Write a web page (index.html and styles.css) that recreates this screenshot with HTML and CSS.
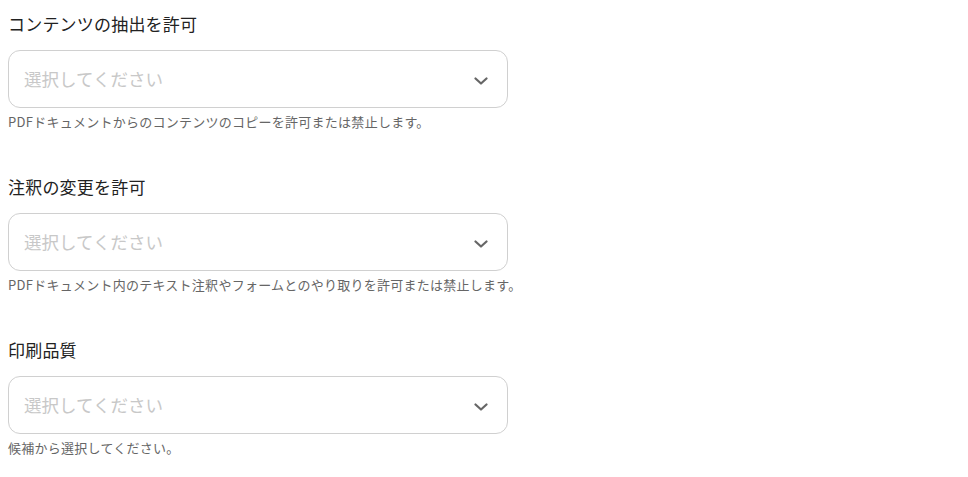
FILE: index.html
```html
<!DOCTYPE html>
<html lang="ja">
<head>
<meta charset="utf-8">
<link rel="stylesheet" href="styles.css">
</head>
<body>
<div class="form">
  <div class="field">
    <label class="label">コンテンツの抽出を許可</label>
    <div class="select">
      <span class="placeholder">選択してください</span>
      <svg class="chevron" width="14" height="8" viewBox="0 0 14 8"><path d="M1.5 1.5 L7 6.5 L12.5 1.5" fill="none" stroke="#666" stroke-width="2.2" stroke-linecap="round" stroke-linejoin="round"/></svg>
    </div>
    <p class="help">PDFドキュメントからのコンテンツのコピーを許可または禁止します。</p>
  </div>
  <div class="field">
    <label class="label">注釈の変更を許可</label>
    <div class="select">
      <span class="placeholder">選択してください</span>
      <svg class="chevron" width="14" height="8" viewBox="0 0 14 8"><path d="M1.5 1.5 L7 6.5 L12.5 1.5" fill="none" stroke="#666" stroke-width="2.2" stroke-linecap="round" stroke-linejoin="round"/></svg>
    </div>
    <p class="help">PDFドキュメント内のテキスト注釈やフォームとのやり取りを許可または禁止します。</p>
  </div>
  <div class="field">
    <label class="label">印刷品質</label>
    <div class="select">
      <span class="placeholder">選択してください</span>
      <svg class="chevron" width="14" height="8" viewBox="0 0 14 8"><path d="M1.5 1.5 L7 6.5 L12.5 1.5" fill="none" stroke="#666" stroke-width="2.2" stroke-linecap="round" stroke-linejoin="round"/></svg>
    </div>
    <p class="help">候補から選択してください。</p>
  </div>
</div>
</body>
</html>
```

FILE: styles.css
```css
html, body {
  margin: 0;
  padding: 0;
  background: #fff;
}
body {
  font-family: "Noto Sans CJK JP", "Noto Sans", sans-serif;
  color: #222;
}
.form {
  padding: 12px 8px 0 8px;
  display: flex;
  flex-direction: column;
  gap: 44px;
}
.field {
  display: flex;
  flex-direction: column;
  width: 500px;
}
.label {
  font-size: 17px;
  line-height: 24px;
  font-weight: 400;
  letter-spacing: 0.2px;
  color: #222;
  margin-bottom: 14px;
}
.select {
  box-sizing: border-box;
  height: 58px;
  border: 1px solid #d0d0d0;
  border-radius: 12px;
  display: flex;
  align-items: center;
  justify-content: space-between;
  padding: 0 19px 0 15px;
}
.placeholder {
  font-size: 17.5px;
  color: #c8c8c8;
  margin-top: -2px;
}
.chevron {
  display: block;
  margin-top: 4px;
}
.help {
  margin: 5px 0 0 0;
  font-size: 13px;
  line-height: 18px;
  letter-spacing: 0.26px;
  white-space: nowrap;
  color: #666;
}
```
